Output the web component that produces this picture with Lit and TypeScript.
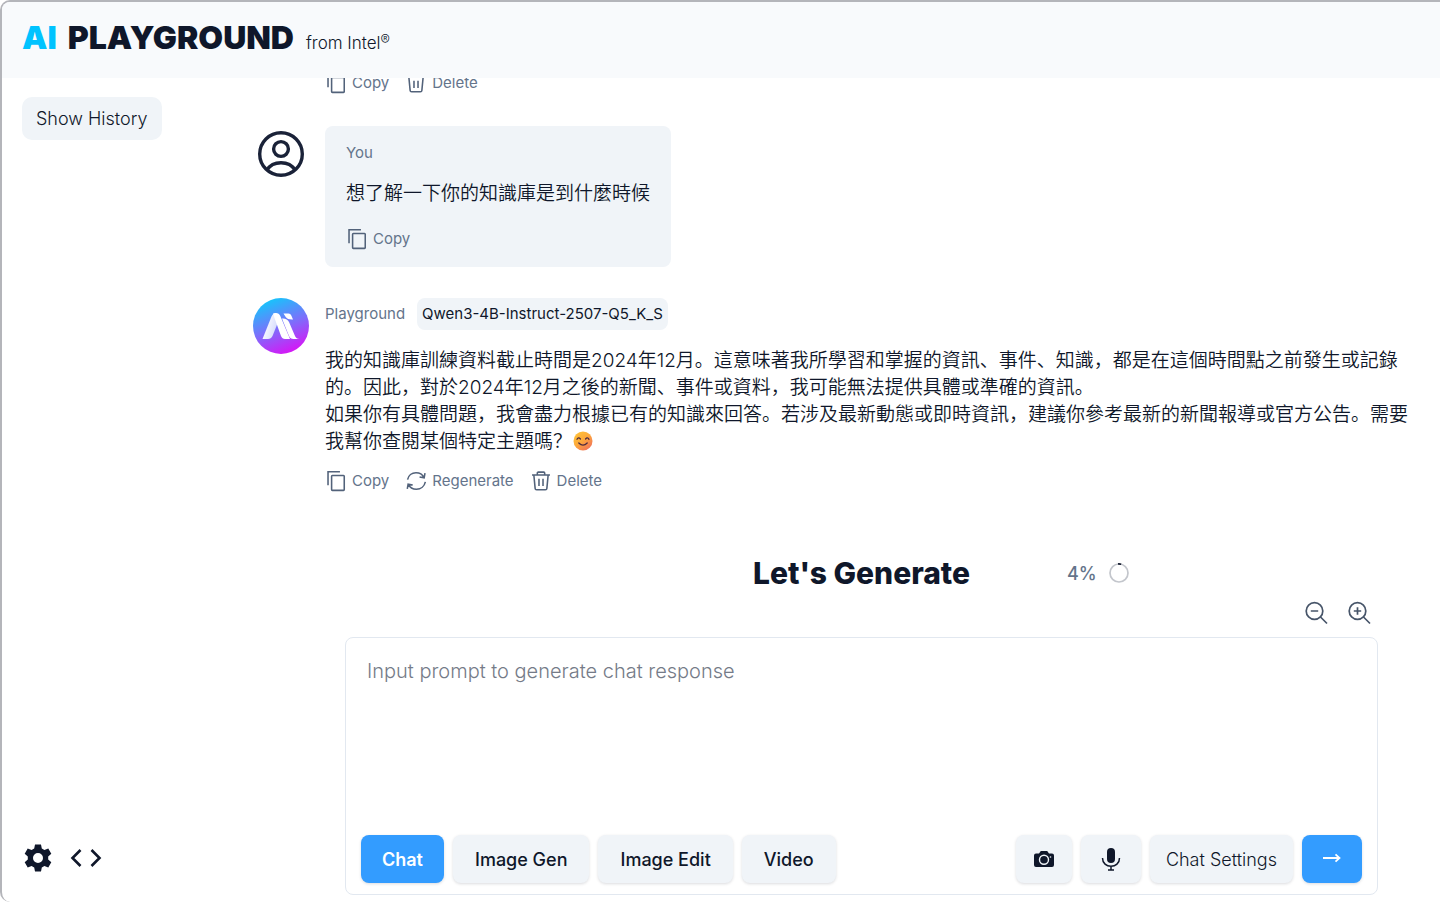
import { LitElement, html, css, svg } from "lit";
import { customElement, property } from "lit/decorators.js";

const icons = {
  copy: svg`<path d="M3.300 16.500V2h13M8 6h12.200a.8.8 0 0 1 .8.8v14.600a.8.8 0 0 1-.8.8H8a.8.8 0 0 1-.8-.8V6.800A.8.8 0 0 1 8 6z"/>`,
  regenerate: svg`<path d="M2.800 10.500C3.700 6 7.500 3 12 3c4 0 7.200 2 8.700 5.200M21.800 3.500L20.900 8.500l-5-.9M22.200 13c-1 4.800-5 8-9.700 8-4 0-7.300-2-8.900-5.300M2.500 20.500L3.400 15.500l5 .9"/>`,
  trash: svg`<path d="M2.200 5.500h19.600M8 5.500V3.300a1 1 0 0 1 1-1h6a1 1 0 0 1 1 1v2.200M4.200 5.500l1.400 14.600a1.600 1.600 0 0 0 1.600 1.500h9.600a1.600 1.600 0 0 0 1.600-1.500l1.400-14.600M9.800 9.500v8M14.200 9.500v8"/>`,
  zoomOut: svg`<circle cx="10.500" cy="10" r="8.300"/><path d="M16.500 16l6.500 6.500M6.800 10h7.400"/>`,
  zoomIn: svg`<circle cx="10.500" cy="10" r="8.300"/><path d="M16.500 16l6.500 6.500M6.800 10h7.400M10.500 6.300v7.400"/>`,
};

@customElement("line-icon")
export class LineIcon extends LitElement {
  @property() name: keyof typeof icons = "copy";

  static styles = css`
    :host { display: inline-flex; width: 22px; height: 22px; }
    svg { width: 100%; height: 100%; fill: none; stroke: currentColor; stroke-width: 1.700; }
  `;

  render() {
    return html`<svg viewBox="0 0 24 24" aria-hidden="true">${icons[this.name]}</svg>`;
  }
}

@customElement("message-actions")
export class MessageActions extends LitElement {
  @property({ type: Array }) actions: [keyof typeof icons, string][] = [];

  static styles = css`
    :host { display: flex; gap: 16px; height: 24px; }
    button {
      display: flex; align-items: center; gap: 5px; padding: 0; border: 0;
      background: none; color: #64748b; font: inherit; font-size: 15px; font-weight: 400; line-height: 24px; cursor: pointer;
    }
    line-icon { color: #52627a; }
  `;

  render() {
    return this.actions.map(([icon, label]) => html`<button><line-icon name=${icon}></line-icon>${label}</button>`);
  }
}

@customElement("app-root")
export class AppRoot extends LitElement {
  static styles = css`
    :host {
      display: flex; flex-direction: column; height: 100vh; box-sizing: border-box; overflow: hidden;
      border-top: 2px solid #b4b5ba; border-left: 2px solid #b4b5ba;
      border-radius: 10px 0 0 10px; background: #fff; color: #0f172a;
      font-family: Inter, "Noto Sans CJK SC", sans-serif; font-size: 19px; font-weight: 350;
    }
    *, *::before { box-sizing: border-box; }
    button { font: inherit; color: inherit; border: 0; cursor: pointer; }
    header { flex: none; display: flex; align-items: baseline; gap: 12px; height: 76px; padding: 16px 20px; background: #f8fafc; }
    h1 { display: flex; gap: 11px; margin: 0; font-size: 32px; line-height: 40px; font-weight: 900; }
    .accent { color: #00c3ff; }
    .maker { font-size: 17px; }
    sup { font-size: 14px; line-height: 0; vertical-align: 4px; }
    .body { flex: 1; min-height: 0; display: grid; grid-template-columns: 251px minmax(0, 1fr); }
    aside { display: flex; flex-direction: column; align-items: flex-start; justify-content: space-between; padding: 19px 20px 28px; }
    .history { padding: 0 14px; height: 43px; border-radius: 10px; background: #f0f4f8; font-size: 18px; }
    .tools { display: flex; gap: 16px; }
    .tool { display: flex; padding: 0; background: none; }
    .tool svg { width: 32px; height: 32px; }
    main { display: flex; flex-direction: column; min-width: 0; min-height: 0; }
    .chat { flex: 1; min-height: 0; overflow: hidden; display: flex; flex-direction: column; justify-content: flex-end; gap: 31px; padding: 0 30px 62px 0; }
    .message { flex: none; display: grid; grid-template-columns: 56px minmax(0, 1fr); gap: 16px; align-items: start; }
    .content { grid-column: 2; }
    .avatar { width: 56px; height: 56px; }
    .bubble { justify-self: start; padding: 16px 21px; border-radius: 8px; background: #f0f4f8; }
    .name { color: #64748b; font-size: 15px; line-height: 22px; font-weight: 400; }
    p { margin: 17px 0 14px; line-height: 27px; }
    .bubble p { margin: 16px 0 20px; }
    .by { display: flex; align-items: center; gap: 12px; height: 32px; }
    .model { padding: 0 5px; border-radius: 8px; background: #f0f4f8; font-size: 15px; line-height: 32px; font-weight: 400; }
    .emoji { width: 20px; height: 20px; margin-left: 1px; vertical-align: -3px; }
    .prompt { flex: none; padding: 0 62px 7px 92px; }
    .heading { display: grid; grid-template-columns: 1fr auto 1fr; align-items: center; }
    h2 { grid-column: 2; margin: 0; font-size: 30px; line-height: 36px; font-weight: 850; }
    .usage { display: flex; align-items: center; gap: 12px; padding-left: 97px; color: #64748b; font-size: 18px; font-weight: 450; }
    .usage svg { width: 20px; height: 20px; }
    .zoom { display: flex; justify-content: flex-end; gap: 19px; padding: 10px 7px 12px; color: #475569; }
    .zoom button { display: flex; padding: 0; background: none; color: inherit; }
    .zoom line-icon { width: 24px; height: 24px; }
    .box { border: 1px solid #e2e8f0; border-radius: 8px; padding: 17px 15px 11px; }
    textarea {
      display: block; width: 100%; height: 180px; padding: 0 6px; border: 0; outline: 0; resize: none; background: none;
      font: inherit; font-size: 20px; line-height: 32px; color: inherit;
    }
    textarea::placeholder { color: #757b88; opacity: 1; }
    .bar { display: flex; gap: 9px; }
    .bar button {
      display: flex; align-items: center; justify-content: center; height: 48px; padding: 0 22px;
      border-radius: 8px; background: #f0f4f8; box-shadow: 0 1px 3px #0f172a26; font-size: 18px;
    }
    .bar .mode { font-weight: 500; }
    .bar .primary { background: #339cff; color: #fff; }
    .bar .mode.primary { padding: 0 21px; font-weight: 600; }
    .bar .wide { padding: 0 16px; }
    .bar .icon { width: 60px; padding: 0; }
    .bar .icon:first-of-type { width: 56px; }
    .icon svg { width: 24px; height: 24px; }
    .right { display: flex; gap: 9px; margin-left: auto; }
  `;

  render() {
    return html`
      <header>
        <h1><span class="accent">AI</span><span>PLAYGROUND</span></h1>
        <span class="maker">from Intel<sup>®</sup></span>
      </header>
      <div class="body">
        <aside>
          <button class="history">Show History</button>
          <div class="tools">
            <button class="tool" aria-label="Settings">
              <svg viewBox="0 0 32 32" aria-hidden="true"><path fill="currentColor" fill-rule="evenodd" d="M13 2.500h6l.8 4 2.600 1.500 3.900-1.400 3 5.200-3.100 2.700v3l3.100 2.700-3 5.200-3.900-1.400-2.600 1.500-.8 4h-6l-.8-4L9.600 24l-3.900 1.400-3-5.200 3.100-2.700v-3l-3.100-2.700 3-5.200L9.600 8l2.600-1.500zM16 11a5 5 0 1 0 0 10 5 5 0 0 0 0-10z"/></svg>
            </button>
            <button class="tool" aria-label="Developer console">
              <svg viewBox="0 0 32 32" aria-hidden="true"><path d="M10.500 8L2.500 16l8 8M21.500 8l8 8-8 8" fill="none" stroke="currentColor" stroke-width="2.600"/></svg>
            </button>
          </div>
        </aside>
        <main>
          <section class="chat">
            <article class="message">
              <message-actions class="content" .actions=${[["copy", "Copy"], ["trash", "Delete"]]}></message-actions>
            </article>
            <article class="message">
              <svg class="avatar" viewBox="0 0 56 56" fill="none" stroke="#1a2238" stroke-width="3.400" aria-hidden="true">
                <circle cx="28" cy="28" r="21.300"/><circle cx="28" cy="23" r="7.400"/><path d="M14 44c3-5 8.300-7.300 14-7.300S39 39 42 44"/>
              </svg>
              <div class="bubble">
                <div class="name">You</div>
                <p>想了解一下你的知識庫是到什麼時候</p>
                <message-actions .actions=${[["copy", "Copy"]]}></message-actions>
              </div>
            </article>
            <article class="message">
              <svg class="avatar" viewBox="0 0 56 56" aria-hidden="true">
                <defs>
                  <linearGradient id="sky" x1=".3" y1="0" x2=".7" y2="1"><stop offset="0" stop-color="#12c8fb"/><stop offset=".5" stop-color="#7b70fb"/><stop offset="1" stop-color="#dc10f5"/></linearGradient>
                  <linearGradient id="fold" x1=".2" y1="0" x2=".9" y2=".3"><stop offset="0" stop-color="#fff"/><stop offset="1" stop-color="#dbe0fd"/></linearGradient>
                </defs>
                <circle cx="28" cy="28" r="28" fill="url(#sky)"/>
                <path fill="url(#fold)" d="M9.500 41L18.500 18.500Q20 15 23 15l2.500 8-6 15q-1.500 3-4.500 3z"/>
                <path fill="#fff" d="M20 15.500q1-.5 3-.5 3 0 4.300 3L37 41h-5q-2.800 0-4-3l-6.500-18q-.6-2.500-1.500-4.500z"/>
                <path fill="#fff" d="M29 20.500q5-.5 7 3.500l6 14q1.200 3 4.500 3h-6q-3.300 0-4.500-3zM30.500 15.500h5q2 0 2.800 2l1.700 4q-5.500.3-7.300-2.500z"/>
              </svg>
              <div>
                <div class="by"><span class="name">Playground</span><span class="model">Qwen3-4B-Instruct-2507-Q5_K_S</span></div>
                <p>我的知識庫訓練資料截止時間是2024年12月。這意味著我所學習和掌握的資訊、事件、知識，都是在這個時間點之前發生或記錄的。因此，對於2024年12月之後的新聞、事件或資料，我可能無法提供具體或準確的資訊。<br>如果你有具體問題，我會盡力根據已有的知識來回答。若涉及最新動態或即時資訊，建議你參考最新的新聞報導或官方公告。需要我幫你查閱某個特定主題嗎？<svg class="emoji" viewBox="0 0 20 20" role="img" aria-label="😊"><defs><linearGradient id="face" x1="0" y1="0" x2=".8" y2="1"><stop offset="0" stop-color="#ffc738"/><stop offset=".5" stop-color="#fdaa3a"/><stop offset="1" stop-color="#f0705c"/></linearGradient></defs><circle cx="10" cy="10" r="9.500" fill="url(#face)"/><g fill="none" stroke="#4b2b40" stroke-width="1.300" stroke-linecap="round"><path d="M4 8.300q1.500-2.600 3.400-.3M12.600 8q1.800-2.300 3.400.3M5.800 12q4.200 4.300 8.400 0"/></g></svg></p>
                <message-actions .actions=${[["copy", "Copy"], ["regenerate", "Regenerate"], ["trash", "Delete"]]}></message-actions>
              </div>
            </article>
          </section>
          <section class="prompt">
            <div class="heading">
              <h2>Let's Generate</h2>
              <div class="usage">4%<svg viewBox="0 0 20 20" fill="none" aria-hidden="true"><circle cx="10" cy="10" r="9" stroke="#c3c6cc" stroke-width="1.700"/><path d="M9 1a9 9 0 0 1 3.200.3" stroke="#0f172a" stroke-width="1.700"/></svg></div>
            </div>
            <div class="zoom">
              <button aria-label="Zoom out"><line-icon name="zoomOut"></line-icon></button>
              <button aria-label="Zoom in"><line-icon name="zoomIn"></line-icon></button>
            </div>
            <div class="box">
              <textarea aria-label="Prompt" placeholder="Input prompt to generate chat response"></textarea>
              <div class="bar">
                <button class="mode primary">Chat</button>
                <button class="mode">Image Gen</button>
                <button class="mode">Image Edit</button>
                <button class="mode">Video</button>
                <div class="right">
                  <button class="icon" aria-label="Camera"><svg viewBox="0 0 24 24" aria-hidden="true"><path fill="currentColor" d="M4 6.500h3L8.800 4h6.400L17 6.500h3a2 2 0 0 1 2 2V18a2 2 0 0 1-2 2H4a2 2 0 0 1-2-2V8.500a2 2 0 0 1 2-2z"/><circle cx="12" cy="12.700" r="4.500" fill="none" stroke="#f0f4f8" stroke-width="1.400"/><circle cx="18.500" cy="10" r=".8" fill="#f0f4f8"/></svg></button>
                  <button class="icon" aria-label="Microphone"><svg viewBox="0 0 24 24" aria-hidden="true"><rect x="8" y="1" width="8" height="15" rx="4" fill="currentColor"/><path d="M3.500 11c0 5.500 4 8.200 8.500 8.200s8.500-2.700 8.500-8.200M12 19v4M9 23h6" fill="none" stroke="currentColor" stroke-width="1.500"/></svg></button>
                  <button class="wide">Chat Settings</button>
                  <button class="icon primary" aria-label="Send"><svg viewBox="0 0 24 24" aria-hidden="true"><path d="M3 11h16M15.500 7.300l4 3.700-4 3.700" fill="none" stroke="currentColor" stroke-width="1.800"/></svg></button>
                </div>
              </div>
            </div>
          </section>
        </main>
      </div>
    `;
  }
}
